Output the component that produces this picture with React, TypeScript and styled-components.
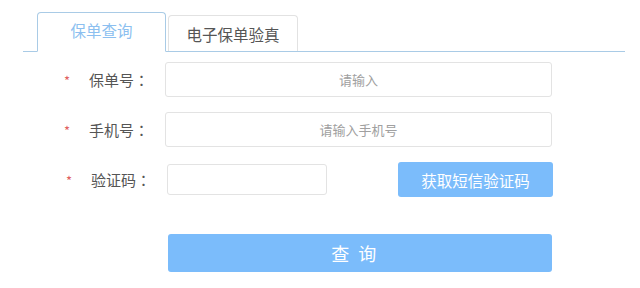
import React from "react";
import styled, { createGlobalStyle } from "styled-components";

const Global = createGlobalStyle`
  html, body { margin: 0; padding: 0; background: #fff; }
  body { font-family: "Microsoft YaHei", "Noto Sans CJK SC", "Noto Sans", sans-serif; }
`;

const Page = styled.div`
  width: 640px;
  height: 288px;
  padding-top: 12px;
  box-sizing: border-box;
`;

const TabBar = styled.div`
  margin-left: 23px;
  width: 602px;
  display: flex;
  align-items: flex-end;
  gap: 2px;
  padding-left: 14px;
  box-sizing: border-box;
  border-bottom: 1px solid #a9cbe6;
  height: 40px;
`;

const Tab = styled.div<{ $active?: boolean }>`
  box-sizing: border-box;
  width: ${(p) => (p.$active ? 129 : 130)}px;
  height: ${(p) => (p.$active ? 40 : 36)}px;
  margin-bottom: ${(p) => (p.$active ? -1 : 0)}px;
  border: 1px solid ${(p) => (p.$active ? "#a9cbe6" : "#e2e2e2")};
  border-bottom: ${(p) => (p.$active ? "1px solid #fff" : "none")};
  border-radius: 4px 4px 0 0;
  background: #fff;
  display: flex;
  justify-content: center;
  padding-top: ${(p) => (p.$active ? 7 : 8)}px;
  font-size: 15.5px;
  line-height: 20px;
  color: ${(p) => (p.$active ? "#8cbff0" : "#555")};
`;

const Form = styled.div`
  margin-top: 10px;
  display: flex;
  flex-direction: column;
  gap: 15px;
`;

const Row = styled.div`
  display: flex;
  align-items: center;
  height: 35px;
`;

const Star = styled.span<{ $shift?: number }>`
  margin-left: ${(p) => 64 + (p.$shift || 0)}px;
  width: 25px;
  color: #e06060;
  font-size: 13px;
  padding-top: 2px;
`;

const Label = styled.span`
  width: ${76}px;
  font-family: "Microsoft YaHei", "Noto Sans CJK TC", sans-serif;
  font-size: 15px;
  color: #555;
`;

const Input = styled.input<{ $w: number }>`
  box-sizing: border-box;
  width: ${(p) => p.$w}px;
  height: 35px;
  border: 1px solid #e3e3e3;
  border-radius: 3px;
  text-align: center;
  font-family: inherit;
  font-size: 13px;
  color: #333;
  outline: none;
  &::placeholder { color: #a0a0a0; }
`;

const CodeInput = styled(Input)`
  height: 31px;
`;

const SmsButton = styled.button`
  margin-left: 71px;
  width: 155px;
  height: 35px;
  border: none;
  border-radius: 3px;
  background: #7bbcfb;
  color: #fff;
  font-family: inherit;
  font-size: 15.5px;
  padding: 0;
`;

const QueryButton = styled.button`
  display: block;
  margin: 37px 0 0 168px;
  width: 384px;
  height: 38px;
  border: none;
  border-radius: 3px;
  background: #7bbcfb;
  color: #fff;
  font-family: inherit;
  font-size: 18px;
  letter-spacing: 2.5px;
  padding: 0 10px 0 0;
`;

export default function App() {
  return (
    <Page>
      <Global />
      <TabBar>
        <Tab $active>保单查询</Tab>
        <Tab>电子保单验真</Tab>
      </TabBar>
      <Form>
        <Row>
          <Star>*</Star>
          <Label>保单号：</Label>
          <Input $w={387} placeholder="请输入" />
        </Row>
        <Row>
          <Star>*</Star>
          <Label>手机号：</Label>
          <Input $w={387} placeholder="请输入手机号" />
        </Row>
        <Row>
          <Star $shift={2}>*</Star>
          <Label>验证码：</Label>
          <CodeInput $w={160} />
          <SmsButton>获取短信验证码</SmsButton>
        </Row>
      </Form>
      <QueryButton>查 询</QueryButton>
    </Page>
  );
}
